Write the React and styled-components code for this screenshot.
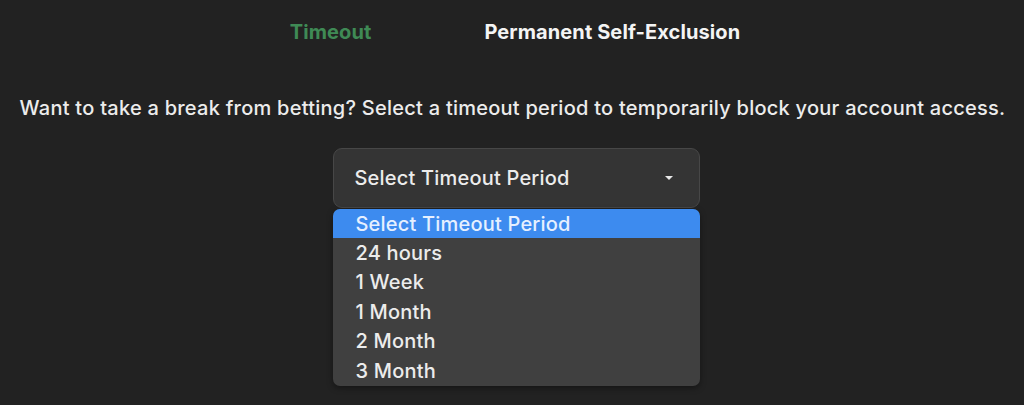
import React from "react";
import styled, { createGlobalStyle } from "styled-components";

const Global = createGlobalStyle`
  html, body { margin: 0; padding: 0; background: #222222; }
  body { font-family: Inter, "Noto Sans", sans-serif; color: #ececec; }
  * { box-sizing: border-box; }
`;

const Page = styled.div`
  width: 1024px;
  height: 405px;
  background: #222222;
  display: flex;
  flex-direction: column;
  align-items: center;
  overflow: hidden;
`;

const Tabs = styled.div`
  display: flex;
  gap: 113px;
  padding-top: 20px;
  height: 44px;
  margin-left: 6px;
`;

const Tab = styled.div`
  font-size: 20px;
  font-weight: 700;
  line-height: 24px;
  letter-spacing: 0.1px;
  color: ${(p) => (p.$active ? "#3f8a55" : "#f4f4f4")};
`;

const Text = styled.p`
  margin: 52px 0 0 1px;
  font-size: 20px;
  font-weight: 500;
  line-height: 24px;
  letter-spacing: 0.25px;
  color: #ececec;
  white-space: nowrap;
`;

const SelectWrap = styled.div`
  margin: 28px 0 0 8px;
  width: 367px;
  display: flex;
  flex-direction: column;
  gap: 1px;
`;

const SelectBox = styled.div`
  height: 60px;
  border-radius: 9px;
  background: #343434;
  border: 1px solid #474747;
  display: flex;
  align-items: center;
  justify-content: space-between;
  padding: 0 26px 0 21px;
  font-size: 20px;
  font-weight: 500;
  letter-spacing: 0.2px;
  color: #ececec;
`;

const Caret = styled.span`
  width: 0;
  height: 0;
  border-left: 4px solid transparent;
  border-right: 4px solid transparent;
  border-top: 4px solid #e8e8e8;
`;

const Menu = styled.ul`
  list-style: none;
  margin: 0;
  padding: 0 0 1px;
  background: #404040;
  border-radius: 7px;
  overflow: hidden;
  box-shadow: 0 2px 6px rgba(0, 0, 0, 0.4);
`;

const Option = styled.li`
  height: 29.4px;
  display: flex;
  align-items: center;
  padding-left: 23px;
  font-size: 20px;
  font-weight: 500;
  letter-spacing: 0.2px;
  color: ${(p) => (p.$selected ? "#e6f0ff" : "#ececec")};
  background: ${(p) => (p.$selected ? "#3d8bef" : "transparent")};
`;

const options = ["Select Timeout Period", "24 hours", "1 Week", "1 Month", "2 Month", "3 Month"];

export default function App() {
  return (
    <>
      <Global />
      <Page>
        <Tabs>
          <Tab $active>Timeout</Tab>
          <Tab>Permanent Self-Exclusion</Tab>
        </Tabs>
        <Text>
          Want to take a break from betting? Select a timeout period to temporarily block your account access.
        </Text>
        <SelectWrap>
          <SelectBox>
            <span>Select Timeout Period</span>
            <Caret />
          </SelectBox>
          <Menu>
            {options.map((o, i) => (
              <Option key={o} $selected={i === 0}>
                {o}
              </Option>
            ))}
          </Menu>
        </SelectWrap>
      </Page>
    </>
  );
}
